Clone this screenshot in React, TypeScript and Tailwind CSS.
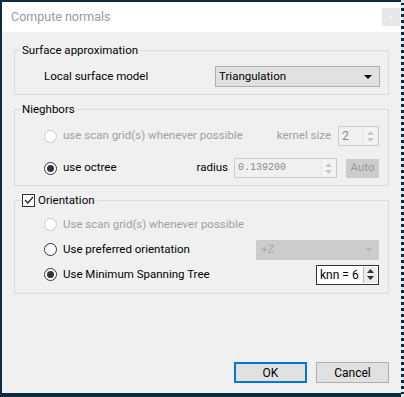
import React from "react";

const FONT = { fontFamily: 'Roboto, "Liberation Sans", Arial, sans-serif' };

function Radio({ checked, disabled }: { checked?: boolean; disabled?: boolean }) {
  return (
    <span
      className={`w-[13px] h-[13px] rounded-full border bg-white flex items-center justify-center shrink-0 ${
        disabled ? "border-[#cccccc]" : "border-[#333333]"
      }`}
    >
      {checked && <span className="w-[7px] h-[7px] rounded-full bg-[#333333]" />}
    </span>
  );
}

function Arrows({ disabled }: { disabled?: boolean }) {
  const c = disabled ? "#c8c8c8" : "#333333";
  return (
    <div
      className={`w-[14px] h-full flex flex-col items-center justify-center gap-[3px] border-l ${
        disabled ? "border-[#e3e3e3] bg-[#f4f4f4]" : "border-[#bcbcbc] bg-[#ececec]"
      }`}
    >
      <svg width="7" height="4" viewBox="0 0 7 4">
        <path d="M0 4 L3.5 0 L7 4 Z" fill={c} />
      </svg>
      <svg width="7" height="4" viewBox="0 0 7 4">
        <path d="M0 0 L3.5 4 L7 0 Z" fill={c} />
      </svg>
    </div>
  );
}

function Spin({
  value,
  width,
  disabled,
  mono,
}: {
  value: string;
  width: string;
  disabled?: boolean;
  mono?: boolean;
}) {
  return (
    <div
      className={`${width} h-[20px] flex items-center border p-[1px] ${
        disabled ? "border-[#cccccc] bg-[#f0f0f0] text-[#8a8a8a]" : "border-[#333333] bg-white text-black"
      }`}
    >
      <span
        className="flex-1 pl-[2px] leading-none text-[12px]"
        style={mono ? { fontFamily: '"Liberation Mono", monospace', fontSize: 10 } : undefined}
      >
        {value}
      </span>
      <Arrows disabled={disabled} />
    </div>
  );
}

export default function App() {
  return (
    <div
      className="w-[404px] h-[397px] bg-[#0d2c3f] pt-[2px] pl-[2px] border-r-[3px] border-dotted border-r-[#dfe6ea]"
      style={FONT}
    >
      <div className="w-[399px] h-[391px] flex flex-col text-[11.5px] text-black">
        {/* title bar */}
        <div className="h-[30px] bg-white flex items-center justify-between pl-[9px] pr-[1px]">
          <span className="text-[#9a9a9a] text-[12.5px]">Compute normals</span>
          <div className="w-[18px] h-[18px] bg-[#e6e6e6] flex items-center justify-center text-[#f6f6f6] text-[10px]">
            ×
          </div>
        </div>

        <div className="flex-1 bg-[#f0f0f0] px-[12px] pb-[10px] flex flex-col">
          {/* Surface approximation */}
          <fieldset className="border border-[#dcdcdc] mt-[10px]">
            <legend className="ml-[6px] px-[1px] leading-[16px]">Surface approximation</legend>
            <div className="flex items-center justify-between pl-[29px] pr-[8px] pt-[8px] pb-[7px]">
              <span>Local surface model</span>
              <div className="w-[165px] h-[21px] border border-[#adadad] bg-[#e1e1e1] flex items-center justify-between pl-[3px] pr-[7px]">
                <span>Triangulation</span>
                <svg width="8" height="4" viewBox="0 0 8 4">
                  <path d="M0 0 L8 0 L4 4 Z" fill="#000" />
                </svg>
              </div>
            </div>
          </fieldset>

          {/* Neighbors */}
          <fieldset className="border border-[#dcdcdc] mt-[6px]">
            <legend className="ml-[6px] px-[1px] leading-[16px]">Nieghbors</legend>
            <div className="flex flex-col gap-[12px] pl-[29px] pr-[9px] pt-[9px] pb-[7px]">
              <div className="flex items-center h-[20px]">
                <Radio disabled />
                <span className="ml-[6px] text-[#a0a0a0]">use scan grid(s) whenever possible</span>
                <span className="ml-auto text-[#a0a0a0]">kernel size</span>
                <div className="ml-[7px]">
                  <Spin value="2" width="w-[41px]" disabled />
                </div>
              </div>
              <div className="flex items-center h-[20px]">
                <Radio checked />
                <span className="ml-[6px]">use octree</span>
                <span className="ml-auto">radius</span>
                <div className="ml-[6px]">
                  <Spin value="0.139200" width="w-[103px]" disabled mono />
                </div>
                <div className="ml-[9px] w-[33px] h-[19px] bg-[#cccccc] text-[#9a9a9a] flex items-center justify-center">
                  Auto
                </div>
              </div>
            </div>
          </fieldset>

          {/* Orientation */}
          <fieldset className="border border-[#dcdcdc] mt-[6px]">
            <legend className="ml-[7px] leading-[16px] flex items-center">
              <span className="w-[13px] h-[13px] border border-[#333333] bg-white flex items-center justify-center">
                <svg width="10" height="8" viewBox="0 0 10 8">
                  <path d="M1 4 L3.8 7 L9 1" fill="none" stroke="#222" strokeWidth="1.2" />
                </svg>
              </span>
              <span className="ml-[3px] pr-[2px]">Orientation</span>
            </legend>
            <div className="flex flex-col gap-[4px] pl-[29px] pr-[9px] pt-[6px] pb-[8px]">
              <div className="flex items-center h-[21px]">
                <Radio disabled />
                <span className="ml-[6px] text-[#a0a0a0]">Use scan grid(s) whenever possible</span>
              </div>
              <div className="flex items-center h-[21px]">
                <Radio />
                <span className="ml-[6px]">Use preferred orientation</span>
                <div className="ml-auto w-[123px] h-[20px] bg-[#cccccc] flex items-center justify-between pl-[5px] pr-[6px] text-[#a8a8a8]">
                  <span>+Z</span>
                  <svg width="8" height="4" viewBox="0 0 8 4">
                    <path d="M0 0 L8 0 L4 4 Z" fill="#b8b8b8" />
                  </svg>
                </div>
              </div>
              <div className="flex items-center h-[21px]">
                <Radio checked />
                <span className="ml-[6px]">Use Minimum Spanning Tree</span>
                <div className="ml-auto">
                  <Spin value="knn = 6" width="w-[63px]" />
                </div>
              </div>
            </div>
          </fieldset>

          {/* buttons */}
          <div className="mt-auto flex justify-end gap-[9px]">
            <button className="w-[73px] h-[21px] border-2 border-[#0078d7] bg-[#e1e1e1] text-black text-[12px]">OK</button>
            <button className="w-[73px] h-[21px] border border-[#adadad] bg-[#e1e1e1] text-black text-[12px]">Cancel</button>
          </div>
        </div>
      </div>
    </div>
  );
}
